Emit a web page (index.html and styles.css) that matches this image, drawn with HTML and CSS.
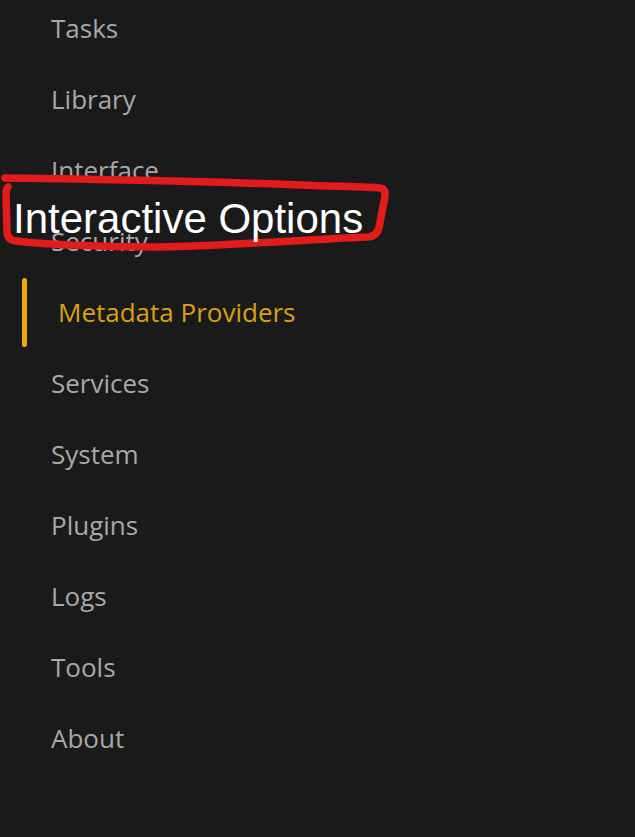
FILE: index.html
```html
<!DOCTYPE html>
<html lang="en">
<head>
<meta charset="utf-8">
<title>Settings</title>
<link rel="stylesheet" href="styles.css">
</head>
<body>
<div class="page">
  <nav class="menu">
    <a class="item" href="#"><span class="bar"></span><span class="label">Tasks</span></a>
    <a class="item" href="#"><span class="bar"></span><span class="label">Library</span></a>
    <a class="item" href="#"><span class="bar"></span><span class="label">Interface</span></a>
    <a class="item" href="#"><span class="bar"></span><span class="label">Security</span></a>
    <a class="item active" href="#"><span class="bar"></span><span class="label">Metadata Providers</span></a>
    <a class="item" href="#"><span class="bar"></span><span class="label">Services</span></a>
    <a class="item" href="#"><span class="bar"></span><span class="label">System</span></a>
    <a class="item" href="#"><span class="bar"></span><span class="label">Plugins</span></a>
    <a class="item" href="#"><span class="bar"></span><span class="label">Logs</span></a>
    <a class="item" href="#"><span class="bar"></span><span class="label">Tools</span></a>
    <a class="item" href="#"><span class="bar"></span><span class="label">About</span></a>
  </nav>
  <div class="annotation">
    <svg class="scribble" width="400" height="90" viewBox="0 170 400 90" aria-hidden="true">
      <path d="M5 178 C 80 179, 200 181, 300 185 C 340 186.5, 368 187, 380 188 Q 386 189, 385 196 L 379 228 Q 377 236, 368 237 C 300 240, 220 246, 160 247 C 100 247, 40 244, 16 241 Q 7 240, 7 231 L 6 194 Q 6 188, 8 187" fill="none" stroke="#e21b1b" stroke-width="7.5" stroke-linecap="round" stroke-linejoin="round"/>
    </svg>
    <span class="note">Interactive Options</span>
  </div>
</div>
</body>
</html>
```
FILE: styles.css
```css
html, body {
  margin: 0;
  padding: 0;
  background: #1a1a1a;
}

.page {
  position: relative;
  width: 635px;
  height: 837px;
  overflow: hidden;
  background: #1a1a1a;
}

.menu {
  display: flex;
  flex-direction: column;
  margin-top: -7px;
  padding-left: 22px;
}

.item {
  display: flex;
  align-items: stretch;
  gap: 24px;
  height: 71px;
  line-height: 71px;
  text-decoration: none;
  color: #a8a8a8;
  font-family: "Open Sans", "Noto Sans", sans-serif;
  font-size: 26px;
  letter-spacing: 0;
}

.bar {
  width: 5px;
  margin: 1px 0;
  border-radius: 3px;
  background: transparent;
}

.item.active {
  color: #d9a011;
}

.item.active .bar {
  background: #eda80c;
}

.item.active .label {
  padding-left: 7px;
}

.annotation {
  position: absolute;
  left: 0;
  top: 170px;
  width: 400px;
  height: 90px;
}

.scribble {
  position: absolute;
  left: 0;
  top: 0;
}

.note {
  position: absolute;
  left: 13px;
  top: 25px;
  font-family: "Liberation Sans", Arial, sans-serif;
  font-size: 42px;
  line-height: 48px;
  color: #ffffff;
  white-space: nowrap;
}
```
